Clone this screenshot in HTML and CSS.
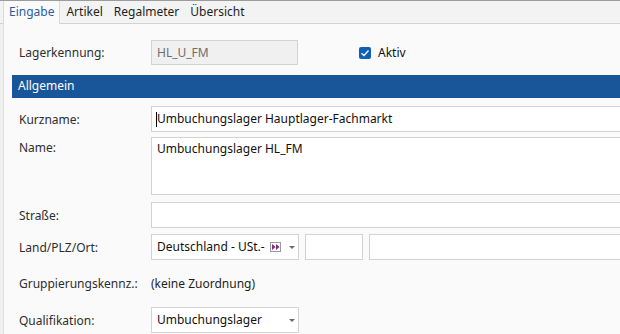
FILE: index.html
```html
<!DOCTYPE html>
<html lang="de">
<head>
    <meta charset="UTF-8">
    <title>Lager - Eingabe</title>
    <link rel="stylesheet" href="styles.css">
</head>
<body>
    <div class="window">
        <div class="tabs">
            <div class="tab active">Eingabe</div>
            <div class="tab">Artikel</div>
            <div class="tab">Regalmeter</div>
            <div class="tab">Übersicht</div>
        </div>

        <div class="page">
            <div class="top-row">
                <span class="label">Lagerkennung:</span>
                <div class="field readonly">HL_U_FM</div>
                <label class="check">
                    <span class="box">
                        <svg width="10" height="8" viewBox="0 0 10 8">
                            <path d="M1.5 4.2 L4 6.5 L8.5 1.5" fill="none" stroke="#fff" stroke-width="1.3"/>
                        </svg>
                    </span>
                    Aktiv
                </label>
            </div>

            <div class="section-head">Allgemein</div>

            <div class="form">
                <span class="label">Kurzname:</span>
                <div class="field wide"><span class="caret"></span>Umbuchungslager Hauptlager-Fachmarkt</div>

                <span class="label top">Name:</span>
                <div class="field wide area">Umbuchungslager HL_FM</div>

                <span class="label">Straße:</span>
                <div class="field wide"></div>

                <span class="label">Land/PLZ/Ort:</span>
                <div class="multi">
                    <div class="field combo">
                        <span class="combo-text">Deutschland - USt.-</span>
                        <span class="ff-icon">
                            <svg width="8" height="6" viewBox="0 0 8 6">
                                <path d="M0 0 L3.5 3 L0 6 Z M4 0 L7.5 3 L4 6 Z" fill="#8a2a84"/>
                            </svg>
                        </span>
                        <span class="arrow"></span>
                    </div>
                    <div class="field plz"></div>
                    <div class="field ort"></div>
                </div>

                <span class="label plain">Gruppierungskennz.:</span>
                <span class="value plain">(keine Zuordnung)</span>

                <span class="label">Qualifikation:</span>
                <div class="field combo">
                    <span class="combo-text">Umbuchungslager</span>
                    <span class="arrow"></span>
                </div>
            </div>
        </div>
    </div>
</body>
</html>
```

FILE: styles.css
```css
body {
    margin: 0;
    font-family: "Noto Sans", "Open Sans", sans-serif;
    font-size: 12px;
    color: #1e1e1e;
    background-color: #f0f0f0;
}

.window {
    width: 620px;
    height: 334px;
    overflow: hidden;
    border-top: 1px solid #9c9c9c;
    box-sizing: border-box;
}

.tabs {
    display: flex;
    height: 22px;
    padding-left: 3px;
    background-color: #f3f3f3;
    border-bottom: 1px solid #d2d2d2;
}

.tab {
    padding: 0 5px 0 6px;
    line-height: 22px;
    color: #1e1e1e;
}

.tab.active {
    padding: 0 5px;
    color: #2d5c9c;
    background-color: #fafafa;
    border-left: 1px solid #dadada;
    border-right: 1px solid #dadada;
    margin-bottom: -1px;
}

.page {
    margin-left: 3px;
    height: 310px;
    background-color: #fafafa;
    border-left: 1px solid #e0e0e0;
    padding: 16px 0 0 8px;
}

.label {
    color: #2e2e2e;
    padding-left: 7px;
}

.top-row {
    display: grid;
    grid-template-columns: 139px 147px 1fr;
    align-items: center;
    height: 25px;
}

.field {
    box-sizing: border-box;
    height: 26px;
    border: 1px solid #d3d3d3;
    background-color: #fff;
    padding: 0 5px;
    line-height: 24px;
    white-space: nowrap;
    color: #111;
}

.field.readonly {
    height: 25px;
    background-color: #f0f0f0;
    color: #6e6e6e;
}

.check {
    display: flex;
    align-items: center;
    gap: 7px;
    margin-left: 61px;
    color: #111;
}

.box {
    width: 12px;
    height: 12px;
    border-radius: 2px;
    background-color: #0f5fb7;
    display: flex;
    align-items: center;
    justify-content: center;
}

.section-head {
    margin-top: 10px;
    height: 23px;
    line-height: 22px;
    padding-left: 6px;
    background-color: #195699;
    color: #fff;
}

.form {
    display: grid;
    grid-template-columns: 139px 1fr;
    row-gap: 6px;
    align-items: center;
    margin-top: 8px;
}

.field.wide {
    margin-right: -4px;
}

.field.area {
    height: 58px;
    margin-top: -1px;
    margin-bottom: 1px;
    line-height: 22px;
}

.label.top {
    align-self: start;
    padding-top: 1px;
}

.caret {
    display: inline-block;
    width: 1px;
    height: 15px;
    background-color: #000;
    vertical-align: middle;
    margin-left: -1px;
}

.multi {
    display: flex;
    gap: 6px;
    margin-right: -4px;
}

.combo {
    width: 148px;
    display: flex;
    align-items: center;
    padding-right: 3px;
}

.combo-text {
    flex: 1;
}

.ff-icon {
    width: 9px;
    height: 8px;
    border: 1px solid #9a9a9a;
    display: flex;
    align-items: center;
    justify-content: center;
    margin-right: 8px;
}

.arrow {
    width: 0;
    height: 0;
    border-left: 3px solid transparent;
    border-right: 3px solid transparent;
    border-top: 3px solid #6a6a6a;
}

.plz {
    width: 58px;
}

.ort {
    flex: 1;
}

.plain {
    height: 35px;
    line-height: 35px;
}

.value {
    color: #1e1e1e;
}
```
